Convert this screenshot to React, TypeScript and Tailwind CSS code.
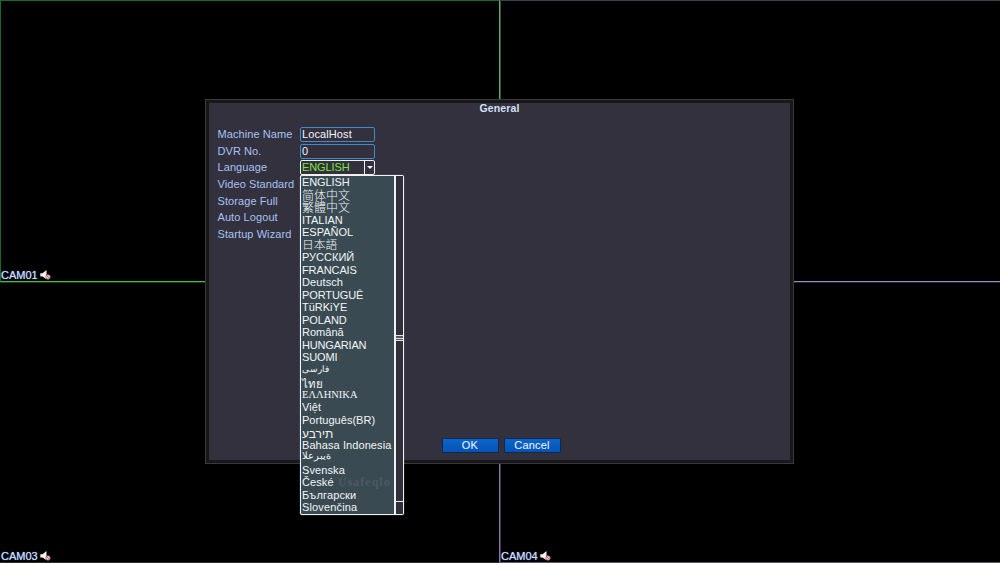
import clsx from 'clsx';

type Option = {
  label: string;
  className?: string;
};

const languages: Option[] = [
  { label: 'ENGLISH', className: 'tracking-[-0.1px]' },
  { label: '简体中文', className: 'pt-px text-[12px] font-light' },
  { label: '繁體中文', className: 'pt-px text-[12px] font-light' },
  { label: 'ITALIAN' },
  { label: 'ESPAÑOL' },
  { label: '日本語', className: 'text-[11.8px] font-light' },
  { label: 'РУССКИЙ' },
  { label: 'FRANCAIS', className: 'tracking-[-0.1px]' },
  { label: 'Deutsch', className: 'tracking-[0.1px]' },
  { label: 'PORTUGUÊ', className: 'tracking-[-0.1px]' },
  { label: 'TüRKiYE' },
  { label: 'POLAND', className: 'tracking-[-0.1px]' },
  { label: 'Română', className: 'tracking-[0.02px]' },
  { label: 'HUNGARIAN', className: 'tracking-[-0.18px]' },
  { label: 'SUOMI', className: 'tracking-[-0.1px]' },
  { label: 'فارسی', className: 'text-[9px] leading-[10px]' },
  { label: 'ไทย', className: 'pt-[3px] text-[11.5px] leading-[11px]' },
  { label: 'ΕΛΛΗΝΙΚΑ', className: "font-['Liberation_Serif',serif] text-[10.5px]" },
  { label: 'Việt', className: 'tracking-[0.1px]' },
  { label: 'Português(BR)', className: 'tracking-[0.03px]' },
  // the recorder draws these two left to right
  { label: 'עברית', className: 'pt-[2px] text-[12px] [unicode-bidi:bidi-override]' },
  { label: 'Bahasa Indonesia', className: 'tracking-[0.08px]' },
  { label: 'العربية', className: 'text-[10px] leading-[10px] [unicode-bidi:bidi-override]' },
  { label: 'Svenska', className: 'tracking-[0.1px]' },
  { label: 'České', className: 'tracking-[0.1px]' },
  { label: 'Български', className: 'tracking-[0.15px]' },
  { label: 'Slovenčina', className: 'tracking-[0.15px]' },
];

const labels = ['Machine Name', 'DVR No.', 'Language', 'Video Standard', 'Storage Full', 'Auto Logout', 'Startup Wizard'];

const MutedIcon = () => (
  <svg width="11" height="10" viewBox="0 0 11 10">
    <path d="M0.3 3.2h2.2L6.5 0v9.2L2.5 6.6H0.3z" fill="#f4f4f8" />
    <circle cx="8" cy="7" r="2.2" fill="#f3dcdc" stroke="#b55b60" strokeWidth="0.9" />
    <path d="M6.5 5.5l3 3" stroke="#b55b60" strokeWidth="0.9" />
  </svg>
);

const Camera = ({ name, className }: { name?: string; className: string }) => (
  <div className={clsx('flex items-end', className)}>
    {name && (
      <div className="flex h-[12px] items-center gap-[2.5px] text-[11px] leading-[12px] text-[#c9dcff] [text-shadow:0_0_1px_#8fb0e8]">
        <span>{name}</span>
        <MutedIcon />
      </div>
    )}
  </div>
);

const DialogButton = ({ label }: { label: string }) => (
  <button className="h-[15px] w-[57px] rounded-[1px] border border-[#10294f] bg-linear-to-b from-[#0a66cc] to-[#0453b4] pr-px text-[11px] leading-[13px] tracking-[0.2px] text-[#e4eeff] [-webkit-text-stroke:0.1px_#e4eeff]">
    {label}
  </button>
);

const LanguageMenu = () => (
  <div className="absolute top-[15px] left-0 z-10 flex h-[340px] w-[104px] rounded-[2px] border border-[#f0f2f4] bg-[#3a4a52] pl-px shadow-[0_0_1px_#d0d4d8]">
    <ul className="w-[92px] shrink-0 text-[11px] text-[#f2f5f7]">
      {languages.map(({ label, className }) => (
        <li key={label} className="h-[12.52px] leading-[12.5px] whitespace-nowrap">
          <span className={clsx('block h-full', className)}>{label}</span>
        </li>
      ))}
    </ul>
    <div className="flex flex-1 flex-col justify-between border-l-2 border-[#f0f2f4] bg-[#302f3a]">
      <div className="h-[158px]" />
      <div className="flex h-[6px] flex-col justify-between bg-[#55545f]">
        <div className="h-px bg-[#e4e4e8]" />
        <div className="h-px bg-[#e4e4e8]" />
        <div className="h-px bg-[#e4e4e8]" />
      </div>
      <div className="h-[158px]" />
      <div className="h-[13px] border-t border-[#f0f2f4]" />
    </div>
    <span className="absolute top-[299px] left-[37px] font-['Liberation_Serif',serif] text-[12px] leading-[14px] font-bold tracking-[1px] text-[#4b5a62]">
      Usafeqlo
    </span>
  </div>
);

const GeneralDialog = () => (
  <div className="absolute top-[99px] left-[205px] flex h-[365px] w-[589px] flex-col border border-[#3a3a3b] bg-[#18181a] p-[3px]">
    <div className="flex flex-1 flex-col bg-[#32313d]">
      <h1 className="h-[23px] text-center text-[10.5px] leading-[11px] font-bold tracking-[0.1px] text-[#d5e1fb]">General</h1>
      <div className="flex pl-[8.5px]">
        <div className="w-[82.5px] text-[11px] tracking-[0.08px] text-[#a9c2f4]">
          {labels.map((label) => (
            <div key={label} className="h-[16.65px] leading-[16px] whitespace-nowrap">
              {label}
            </div>
          ))}
        </div>
        <div className="flex w-[75px] flex-col gap-[2px] pt-px text-[11px] leading-[13px]">
          <div className="h-[15px] rounded-[2px] border border-[#3f8cca] pl-px tracking-[0.1px] text-[#f2f4fa]">LocalHost</div>
          <div className="h-[15px] rounded-[2px] border border-[#3f8cca] pl-px text-[#f2f4fa]">0</div>
          <div className="relative -mt-px">
            <div className="flex h-[15px] rounded-[2px] border border-[#f0f2f4] text-[#7fe53c]">
              <span className="flex-1 pl-px tracking-[-0.1px]">ENGLISH</span>
              <span className="flex w-[10px] items-center justify-center border-l border-[#f0f2f4]">
                <svg width="6" height="3" viewBox="0 0 6 3">
                  <path d="M0 0h6L3 3z" fill="#f0f2f4" />
                </svg>
              </span>
            </div>
            <LanguageMenu />
          </div>
        </div>
      </div>
      <div className="mt-auto mb-[7px] flex gap-[5px] pl-[233px]">
        <DialogButton label="OK" />
        <DialogButton label="Cancel" />
      </div>
    </div>
  </div>
);

export default function App() {
  return (
    <div className="relative h-[563px] w-[1000px] overflow-hidden bg-black font-['Liberation_Sans','Noto_Sans_CJK_SC',sans-serif]">
      <div className="grid h-full grid-cols-[500px_500px] grid-rows-[282px_281px]">
        <Camera
          name="CAM01"
          className="relative border border-t-[#1c6a22] border-r-[#5fae78] border-b-[#3fbe49] border-l-[#1c6a22] shadow-[1px_0_0_#2c5238,0_1px_0_#143d18]"
        />
        <Camera className="relative border-t border-b border-t-[#3f3a4e] border-b-[#9c86c4] shadow-[0_1px_0_#2c2638]" />
        <Camera name="CAM03" className="border-r border-b border-r-[#85799c] border-b-[#2d2936] pl-px shadow-[1px_0_0_#3f3a4a]" />
        <Camera name="CAM04" className="border-b border-[#5f5870] pl-px" />
      </div>
      <GeneralDialog />
    </div>
  );
}
